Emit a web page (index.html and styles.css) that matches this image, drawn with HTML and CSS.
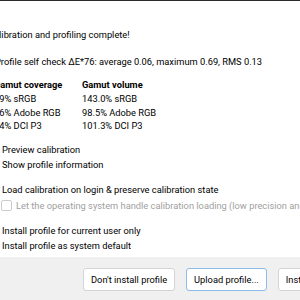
FILE: index.html
```html
<!DOCTYPE html>
<html lang="en">
<head>
    <meta charset="UTF-8"/>
    <title>Profile installation</title>
    <link rel="stylesheet" href="styles.css">
</head>
<body>
    <div class="topline"></div>
    <div class="content">
        <p class="msg heading">Calibration and profiling complete!</p>
        <p class="msg selfcheck">Profile self check ΔE*76: average 0.06, maximum 0.69, RMS 0.13</p>

        <div class="gamut">
            <div class="col cov">
                <div class="th">Gamut coverage</div>
                <div class="td">99% sRGB</div>
                <div class="td">86% Adobe RGB</div>
                <div class="td">94% DCI P3</div>
            </div>
            <div class="col vol">
                <div class="th">Gamut volume</div>
                <div class="td">143.0% sRGB</div>
                <div class="td">98.5% Adobe RGB</div>
                <div class="td">101.3% DCI P3</div>
            </div>
        </div>

        <div class="group first">
            <div class="opt">Preview calibration</div>
            <div class="opt">Show profile information</div>
        </div>

        <div class="group">
            <div class="opt">Load calibration on login &amp; preserve calibration state</div>
            <label class="opt sub disabled"><span class="box"></span>Let the operating system handle calibration loading (low precision and reliability)</label>
        </div>

        <div class="group">
            <div class="opt">Install profile for current user only</div>
            <div class="opt">Install profile as system default</div>
        </div>
    </div>

    <div class="buttonbar">
        <button class="btn">Don't install profile</button>
        <button class="btn focus">Upload profile...</button>
        <button class="btn">Install profile</button>
    </div>
</body>
</html>
```

FILE: styles.css
```css
body{
    margin: 0;
    background: #FFFFFF;
    color: #000000;
    font-family: Roboto, sans-serif;
    font-size: 9.3px;
    overflow: hidden;
    white-space: nowrap;
}

.topline{
    height: 1px;
    background: #2B2B2B;
}

.content{
    height: 256px;
    padding-top: 27px;
    box-sizing: border-box;
}

.msg{
    margin: 0;
    line-height: 14px;
}

.heading{
    margin-left: -12px;
}

.selfcheck{
    margin-top: 13px;
    margin-left: -5px;
}

.gamut{
    display: flex;
    margin-top: 9px;
    margin-left: -6px;
}

.col{
    display: flex;
    flex-direction: column;
}

.cov{
    width: 88px;
}

.th{
    font-weight: bold;
    line-height: 14px;
}

.td{
    line-height: 13.5px;
}

.group{
    margin-top: 10px;
    margin-left: 2px;
}

.group.first{
    margin-top: 9px;
}

.opt{
    display: flex;
    align-items: center;
    line-height: 15px;
}

.sub{
    margin-left: -1px;
    margin-top: 1px;
}

.disabled{
    color: #A0A0A0;
}

.box{
    width: 9px;
    height: 9px;
    border: 1px solid #CCCCCC;
    border-radius: 2px;
    margin-right: 4px;
    flex-shrink: 0;
}

.buttonbar{
    background: #F0F0F0;
    height: 44px;
    display: flex;
    gap: 11px;
    padding: 11px 0 0 83px;
    box-sizing: border-box;
}

.btn{
    height: 23px;
    padding: 0 7px;
    background: #FFFFFF;
    border: 1px solid #D4D4D4;
    border-radius: 3px;
    font-family: Roboto, sans-serif;
    font-size: 9.3px;
    color: #000000;
    flex-shrink: 0;
}

.focus{
    border-color: #8CBCEA;
}
```
